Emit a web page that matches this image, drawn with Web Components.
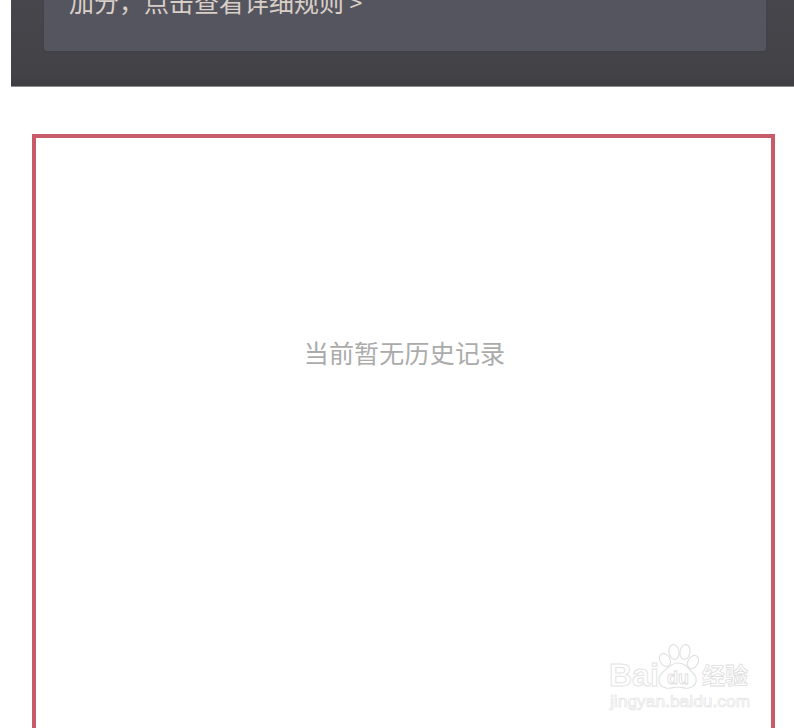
<!DOCTYPE html>
<html lang="zh"><head><meta charset="utf-8"><title>历史记录</title>
<style>
html,body{margin:0;padding:0;background:#fff;height:728px;overflow:hidden;font-family:"Noto Sans CJK SC","Liberation Sans",sans-serif}
</style></head><body>
<rule-banner>加分，点击查看详细规则 <span style="font-size:23px">&gt;</span></rule-banner>
<history-panel>当前暂无历史记录</history-panel>
<baidu-mark></baidu-mark>
<script>
function def(name,html){customElements.define(name,class extends HTMLElement{constructor(){super();this.attachShadow({mode:'open'}).innerHTML=html}})}
def('rule-banner',`<style>
:host{display:block;height:87px;margin-left:11px;background:linear-gradient(#46464c,#424247 85%,#3d3d42);border-bottom:1px solid #8d8d90;box-sizing:border-box;padding:0 28px 35px 33px}
.card{height:51px;background:#55555f;border-radius:0 0 3px 3px;box-sizing:border-box;padding-left:25px;overflow:hidden;box-shadow:0 1px 2px rgba(60,60,66,.6)}
.t{margin-top:-17px;font-size:25px;line-height:36px;color:#d9cfc7;white-space:nowrap}
</style><div class="card"><div class="t"><slot></slot></div></div>`);
def('history-panel',`<style>
:host{display:flex;justify-content:center;box-sizing:border-box;margin:47px 19px 0 32px;height:594px;border:4px solid #c75b68;border-bottom:0;padding:196px 0 0 2px;background:#fff;font-size:25px;letter-spacing:.2px;line-height:36px;color:#ababab}
</style><slot></slot>`);
def('baidu-mark',`<style>
:host{position:absolute;left:607px;top:641px;width:146px;height:72px;display:block}
svg{position:absolute;left:0;top:0}
.b{position:absolute;left:2px;top:16px;font:700 32px/36px "Liberation Sans",sans-serif;color:transparent;-webkit-text-stroke:1px #e4e4e4}
.du{position:absolute;left:60px;top:27px;font:700 18px/20px "Liberation Sans",sans-serif;color:transparent;-webkit-text-stroke:.8px #dcdcdc}
.c{position:absolute;left:95px;top:17px;font:700 23px/32px "Noto Sans CJK SC",sans-serif;color:transparent;-webkit-text-stroke:.8px #dedede;white-space:nowrap}
.u{position:absolute;left:3px;top:50px;font:400 17.4px/20px "Liberation Sans",sans-serif;color:transparent;-webkit-text-stroke:.7px #e4e4e4;white-space:nowrap}
</style>
<svg width="146" height="60" viewBox="0 0 146 60" fill="#fff" stroke="#e2e2e2" stroke-width="1.2">
<ellipse cx="58" cy="19" rx="5" ry="7" transform="rotate(-30 58 19)"/>
<ellipse cx="67" cy="11" rx="5" ry="7.5" transform="rotate(-10 67 11)"/>
<ellipse cx="78" cy="11" rx="5" ry="7.5" transform="rotate(10 78 11)"/>
<ellipse cx="86" cy="21" rx="5" ry="7" transform="rotate(30 86 21)"/>
<path d="M71 22c7 0 10 5 14 9 6 5 6 14-3 16-4 1-7-1-11-1s-8 2-12 1c-9-2-9-11-3-16 5-4 8-9 15-9z"/>
</svg>
<span class="b">Bai</span><span class="du">du</span><span class="c">经验</span><span class="u">jingyan.baidu.com</span>`);
</script>
</body></html>
